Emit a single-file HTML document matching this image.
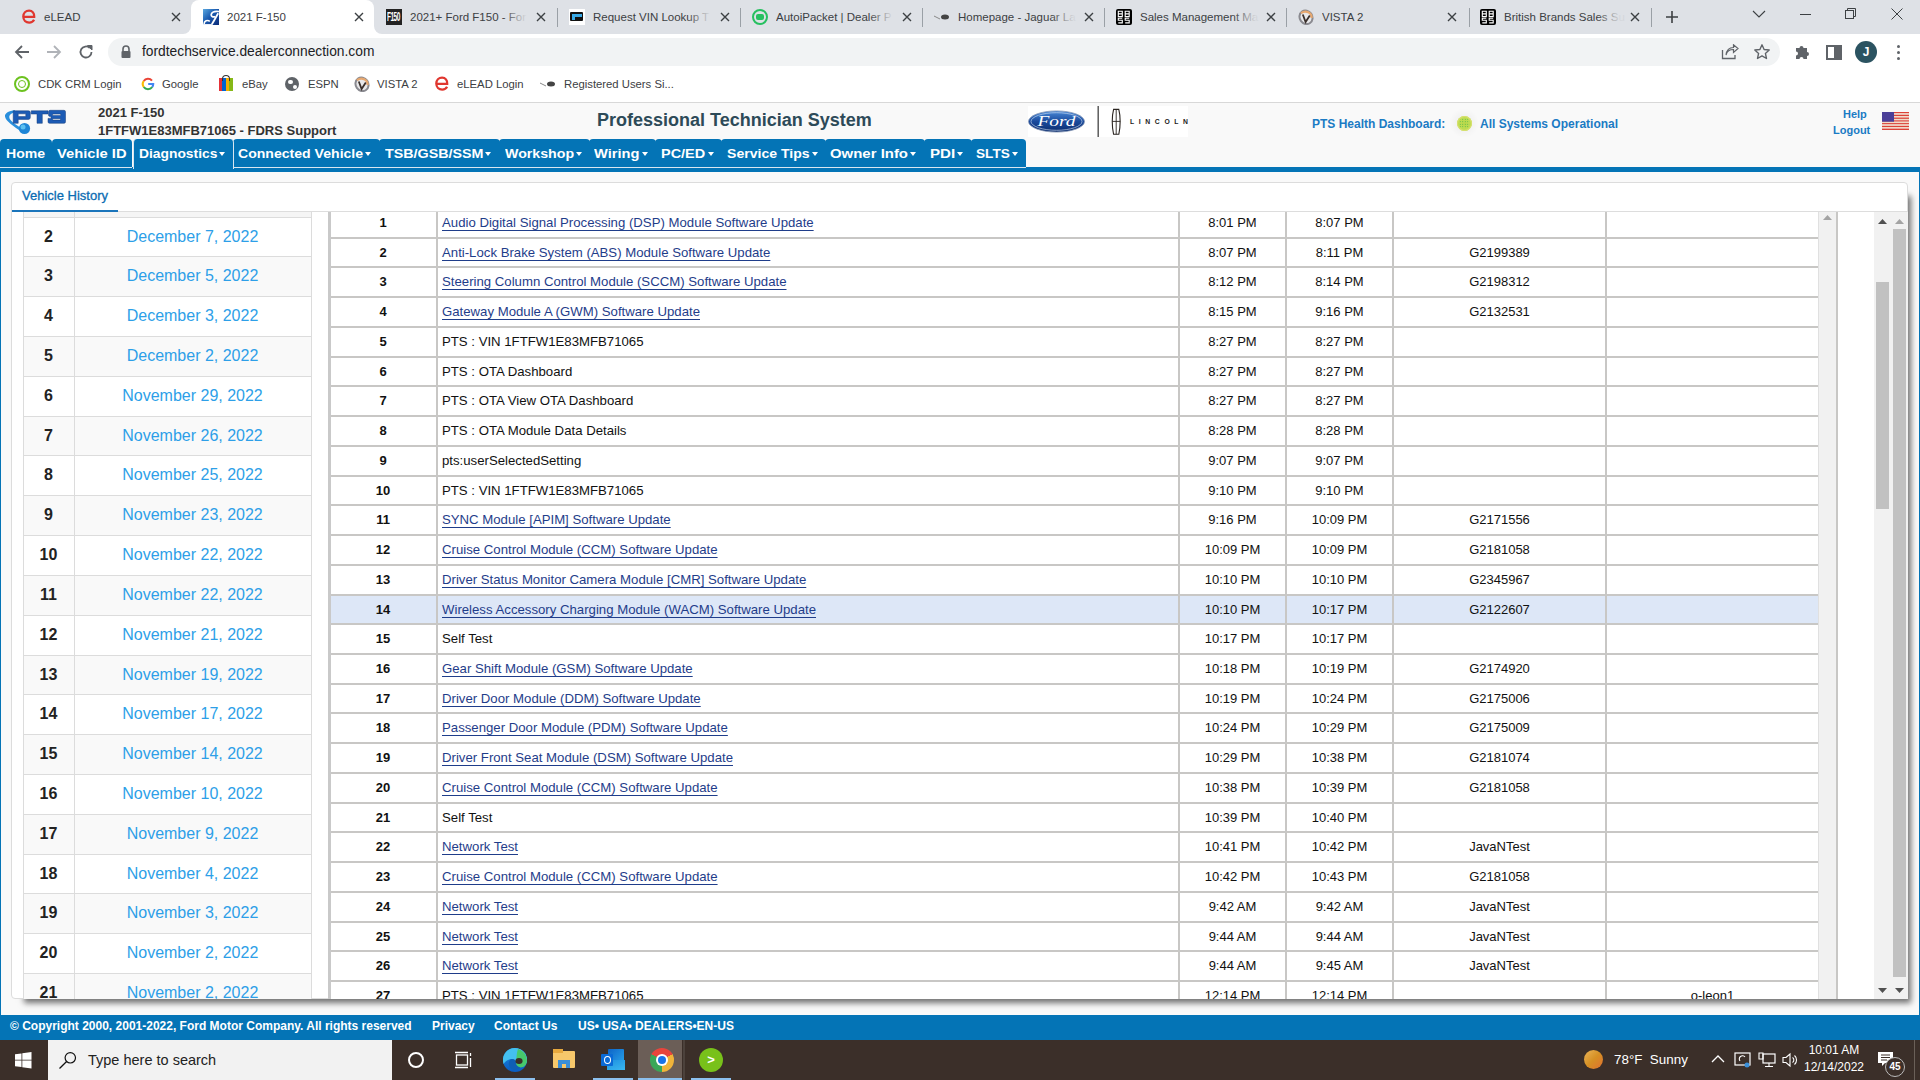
<!DOCTYPE html><html><head><meta charset="utf-8"><style>
*{margin:0;padding:0}
html,body{width:1920px;height:1080px;overflow:hidden;background:#fff;font-family:"Liberation Sans",sans-serif}
.abs{position:absolute}
.ttext{font-size:11.5px;color:#3c4043;white-space:nowrap;overflow:hidden;line-height:14px}
.btext{font-size:11.3px;color:#3c4043;white-space:nowrap;line-height:14px}
.navtab{background:#0474b6;border-radius:4px 4px 0 0;color:#fff;white-space:nowrap}
.navt{font:bold 13px "Liberation Sans";line-height:15px;color:#fff;white-space:nowrap;transform-origin:0 0}
.caret{width:0;height:0;border-left:3.5px solid transparent;border-right:3.5px solid transparent;border-top:4px solid #fff}
.lnum{font:bold 16px "Liberation Sans";color:#222;text-align:center;line-height:19px}
.ldate{font:16px "Liberation Sans";color:#2d9fe8;text-align:center;line-height:19px}
.rnum{font:bold 13px "Liberation Sans";color:#111;text-align:center;line-height:16px}
.rlink{font:13.2px "Liberation Sans";color:#1f3d8a;text-decoration:underline;text-underline-offset:3px;white-space:nowrap;line-height:16px}
.rtxt{font:13.2px "Liberation Sans";color:#111;white-space:nowrap;line-height:16px}
.rc{font:13px "Liberation Sans";color:#111;text-align:center;white-space:nowrap;line-height:16px}
</style></head><body>
<div class="abs" style="left:0;top:0;width:1920px;height:34px;background:#dee1e6"></div>
<div class="abs" style="left:191px;top:0;width:183px;height:34px;background:#fff;border-radius:8px 8px 0 0"></div>
<div class="abs" style="left:183px;top:26px;width:8px;height:8px;background:#fff"></div><div class="abs" style="left:175px;top:18px;width:16px;height:16px;background:#dee1e6;border-radius:8px"></div>
<div class="abs" style="left:374px;top:26px;width:8px;height:8px;background:#fff"></div><div class="abs" style="left:374px;top:18px;width:16px;height:16px;background:#dee1e6;border-radius:8px"></div>
<div class="abs" style="left:557px;top:8px;width:1px;height:19px;background:#9aa0a6"></div>
<div class="abs" style="left:740px;top:8px;width:1px;height:19px;background:#9aa0a6"></div>
<div class="abs" style="left:922px;top:8px;width:1px;height:19px;background:#9aa0a6"></div>
<div class="abs" style="left:1104px;top:8px;width:1px;height:19px;background:#9aa0a6"></div>
<div class="abs" style="left:1286px;top:8px;width:1px;height:19px;background:#9aa0a6"></div>
<div class="abs" style="left:1469px;top:8px;width:1px;height:19px;background:#9aa0a6"></div>
<div class="abs" style="left:1651px;top:8px;width:1px;height:19px;background:#9aa0a6"></div>
<div class="abs ttext" style="left:44px;top:10px;width:122px;">eLEAD</div>
<div class="abs" style="left:138px;top:6px;width:28px;height:20px;background:linear-gradient(90deg,#dee1e600,#dee1e6ee 80%)"></div>
<svg class="abs" style="left:171px;top:12px" width="10" height="10" viewBox="0 0 10 10"><path d="M1 1L9 9M9 1L1 9" stroke="#3c4043" stroke-width="1.4"/></svg>
<svg class="abs" style="left:22px;top:9px" width="14" height="15" viewBox="0 0 14 15"><path d="M2.2 7.8H12.2C12.4 4.2 10.4 1.6 7.1 1.6C3.8 1.6 1.3 4.2 1.3 7.6C1.3 11 3.8 13.6 7.2 13.6C9.4 13.6 11.1 12.6 12.1 10.8" fill="none" stroke="#e0372f" stroke-width="2.3"/></svg>
<div class="abs ttext" style="left:227px;top:10px;width:122px;">2021 F-150</div>
<div class="abs" style="left:321px;top:6px;width:28px;height:20px;background:linear-gradient(90deg,#ffffff00,#ffffffee 80%)"></div>
<svg class="abs" style="left:354px;top:12px" width="10" height="10" viewBox="0 0 10 10"><path d="M1 1L9 9M9 1L1 9" stroke="#3c4043" stroke-width="1.4"/></svg>
<svg class="abs" style="left:203px;top:9px" width="16" height="16" viewBox="0 0 16 16"><defs><linearGradient id="fav2" x1="0" y1="0" x2="1" y2="1"><stop offset="0" stop-color="#5aa8e0"/><stop offset="0.45" stop-color="#1c5cb0"/><stop offset="1" stop-color="#0b2a78"/></linearGradient></defs><rect width="16" height="16" fill="url(#fav2)"/><path d="M16 2.5C12.5 2 9 3 8.3 5.3C7.8 7.2 9.6 8.4 12.3 7.6" stroke="#fff" stroke-width="1.7" fill="none"/><path d="M15.2 4.2L8.8 15.5" stroke="#fff" stroke-width="1.8"/><path d="M6.8 12.3C4.5 10.6 1.2 11.8 1 15.2" stroke="#fff" stroke-width="1.6" fill="none"/><path d="M0 15.5H9" stroke="#e8eef8" stroke-width="1"/></svg>
<div class="abs ttext" style="left:410px;top:10px;width:121px;">2021+ Ford F150 - For</div>
<div class="abs" style="left:503px;top:6px;width:28px;height:20px;background:linear-gradient(90deg,#dee1e600,#dee1e6ee 80%)"></div>
<svg class="abs" style="left:536px;top:12px" width="10" height="10" viewBox="0 0 10 10"><path d="M1 1L9 9M9 1L1 9" stroke="#3c4043" stroke-width="1.4"/></svg>
<div class="abs" style="left:386px;top:9px;width:16px;height:16px;background:#222;overflow:hidden"><div style="position:absolute;left:1px;top:1px;color:#fff;font:bold 13px 'Liberation Sans';line-height:14px;letter-spacing:-1px;transform:scaleX(0.5);transform-origin:0 0">F150</div></div>
<div class="abs ttext" style="left:593px;top:10px;width:122px;">Request VIN Lookup T</div>
<div class="abs" style="left:687px;top:6px;width:28px;height:20px;background:linear-gradient(90deg,#dee1e600,#dee1e6ee 80%)"></div>
<svg class="abs" style="left:720px;top:12px" width="10" height="10" viewBox="0 0 10 10"><path d="M1 1L9 9M9 1L1 9" stroke="#3c4043" stroke-width="1.4"/></svg>
<div class="abs" style="left:569px;top:9px;width:16px;height:16px;background:#fff"><div style="position:absolute;left:1px;top:3px;width:13px;height:9px;background:#111;border-radius:1px"></div><div style="position:absolute;left:3px;top:5px;width:10px;height:3px;background:#39a9e6"></div><div style="position:absolute;left:3px;top:8px;width:3px;height:3px;background:#39a9e6"></div></div>
<div class="abs ttext" style="left:776px;top:10px;width:121px;">AutoiPacket | Dealer P</div>
<div class="abs" style="left:869px;top:6px;width:28px;height:20px;background:linear-gradient(90deg,#dee1e600,#dee1e6ee 80%)"></div>
<svg class="abs" style="left:902px;top:12px" width="10" height="10" viewBox="0 0 10 10"><path d="M1 1L9 9M9 1L1 9" stroke="#3c4043" stroke-width="1.4"/></svg>
<div class="abs" style="left:752px;top:9px;width:12px;height:12px;border:2px solid #27c060;border-radius:8px"><div style="position:absolute;left:2px;top:3px;width:8px;height:6px;background:#27c060;border-radius:2px"></div></div>
<div class="abs ttext" style="left:958px;top:10px;width:121px;">Homepage - Jaguar La</div>
<div class="abs" style="left:1051px;top:6px;width:28px;height:20px;background:linear-gradient(90deg,#dee1e600,#dee1e6ee 80%)"></div>
<svg class="abs" style="left:1084px;top:12px" width="10" height="10" viewBox="0 0 10 10"><path d="M1 1L9 9M9 1L1 9" stroke="#3c4043" stroke-width="1.4"/></svg>
<svg class="abs" style="left:934px;top:13px" width="16" height="8" viewBox="0 0 16 8"><path d="M0 3L6 6" stroke="#888" stroke-width="1"/><ellipse cx="11" cy="4" rx="4" ry="2.5" fill="#444"/></svg>
<div class="abs ttext" style="left:1140px;top:10px;width:121px;">Sales Management Ma</div>
<div class="abs" style="left:1233px;top:6px;width:28px;height:20px;background:linear-gradient(90deg,#dee1e600,#dee1e6ee 80%)"></div>
<svg class="abs" style="left:1266px;top:12px" width="10" height="10" viewBox="0 0 10 10"><path d="M1 1L9 9M9 1L1 9" stroke="#3c4043" stroke-width="1.4"/></svg>
<svg class="abs" style="left:1116px;top:9px" width="16" height="16" viewBox="0 0 16 16"><rect x="0" y="0" width="16" height="16" rx="2" fill="#000"/><g fill="none" stroke="#fff" stroke-width="1.1"><path d="M2.3 2.2H6.3V7.6H2.3ZM2.3 4.9H6.3M9.2 2.2H13.2V7.6H9.2ZM9.2 4.9H13.2"/><path d="M6.3 9.2H2.3V11.3H6.3V13.9H2.3M13.2 9.2H9.2V11.3H13.2V13.9H9.2"/></g></svg>
<div class="abs ttext" style="left:1322px;top:10px;width:120px;">VISTA 2</div>
<div class="abs" style="left:1414px;top:6px;width:28px;height:20px;background:linear-gradient(90deg,#dee1e600,#dee1e6ee 80%)"></div>
<svg class="abs" style="left:1447px;top:12px" width="10" height="10" viewBox="0 0 10 10"><path d="M1 1L9 9M9 1L1 9" stroke="#3c4043" stroke-width="1.4"/></svg>
<svg class="abs" style="left:1298px;top:9px" width="16" height="16" viewBox="0 0 16 16"><ellipse cx="8" cy="8.3" rx="6.3" ry="7" transform="rotate(-35 8 8.3)" fill="#e8e8ea" stroke="#8a8a90" stroke-width="2"/><path d="M3 4.2A7 6.3 -35 0 1 13.6 9" stroke="#e7a870" stroke-width="2.2" fill="none"/><path d="M4.8 5.5L7.6 13L11.8 6.5" stroke="#3a302c" stroke-width="1.8" fill="none"/></svg>
<div class="abs ttext" style="left:1504px;top:10px;width:121px;">British Brands Sales Su</div>
<div class="abs" style="left:1597px;top:6px;width:28px;height:20px;background:linear-gradient(90deg,#dee1e600,#dee1e6ee 80%)"></div>
<svg class="abs" style="left:1630px;top:12px" width="10" height="10" viewBox="0 0 10 10"><path d="M1 1L9 9M9 1L1 9" stroke="#3c4043" stroke-width="1.4"/></svg>
<svg class="abs" style="left:1480px;top:9px" width="16" height="16" viewBox="0 0 16 16"><rect x="0" y="0" width="16" height="16" rx="2" fill="#000"/><g fill="none" stroke="#fff" stroke-width="1.1"><path d="M2.3 2.2H6.3V7.6H2.3ZM2.3 4.9H6.3M9.2 2.2H13.2V7.6H9.2ZM9.2 4.9H13.2"/><path d="M6.3 9.2H2.3V11.3H6.3V13.9H2.3M13.2 9.2H9.2V11.3H13.2V13.9H9.2"/></g></svg>
<svg class="abs" style="left:1665px;top:10px" width="14" height="14" viewBox="0 0 14 14"><path d="M7 1V13M1 7H13" stroke="#3c4043" stroke-width="1.6"/></svg>
<svg class="abs" style="left:1752px;top:9px" width="14" height="10" viewBox="0 0 14 10"><path d="M1 2L7 8L13 2" stroke="#3c4043" stroke-width="1.1" fill="none"/></svg>
<div class="abs" style="left:1800px;top:14px;width:11px;height:1px;background:#3c4043"></div>
<svg class="abs" style="left:1845px;top:8px" width="12" height="12" viewBox="0 0 12 12"><rect x="0.5" y="2.5" width="8" height="8" fill="none" stroke="#3c4043"/><path d="M2.5 2.5V0.5H10.5V8.5H8.5" fill="none" stroke="#3c4043"/></svg>
<svg class="abs" style="left:1891px;top:8px" width="12" height="12" viewBox="0 0 12 12"><path d="M0.5 0.5L11.5 11.5M11.5 0.5L0.5 11.5" stroke="#3c4043" stroke-width="1"/></svg>
<div class="abs" style="left:0;top:34px;width:1920px;height:68px;background:#fff"></div>
<div class="abs" style="left:0;top:102px;width:1920px;height:1px;background:#d8d8d8"></div>
<svg class="abs" style="left:14px;top:44px" width="16" height="16" viewBox="0 0 16 16"><path d="M15 8H2M8 2L2 8L8 14" stroke="#5f6368" stroke-width="1.8" fill="none"/></svg>
<svg class="abs" style="left:46px;top:44px" width="16" height="16" viewBox="0 0 16 16"><path d="M1 8H14M8 2L14 8L8 14" stroke="#b0b3b8" stroke-width="1.8" fill="none"/></svg>
<svg class="abs" style="left:78px;top:44px" width="16" height="16" viewBox="0 0 16 16"><path d="M13.5 8A5.5 5.5 0 1 1 11.8 4" stroke="#5f6368" stroke-width="1.8" fill="none"/><path d="M9.5 1.5H14V6Z" fill="#5f6368" stroke="#5f6368" stroke-width="1"/></svg>
<div class="abs" style="left:108px;top:38px;width:1672px;height:28px;background:#f1f3f4;border-radius:14px"></div>
<svg class="abs" style="left:120px;top:45px" width="12" height="14" viewBox="0 0 12 14"><path d="M3 6V4A3 3 0 0 1 9 4V6" stroke="#5f6368" stroke-width="1.6" fill="none"/><rect x="1.5" y="6" width="9" height="7" rx="1" fill="#5f6368"/></svg>
<div class="abs" style="left:142px;top:44px;font-size:13.8px;color:#202124;white-space:nowrap">fordtechservice.dealerconnection.com</div>
<svg class="abs" style="left:1721px;top:44px" width="18" height="16" viewBox="0 0 18 16"><path d="M1.5 6V14.5H14V11" stroke="#5f6368" stroke-width="1.3" fill="none"/><path d="M5 11C6 7 9 5.5 12.5 5.5V8.5L17 4.5L12.5 0.8V3.5C8 3.5 5.5 7 5 11Z" stroke="#5f6368" stroke-width="1.2" fill="none"/></svg>
<svg class="abs" style="left:1753px;top:43px" width="18" height="18" viewBox="0 0 18 18"><path d="M9 1.8L11.1 6.5L16.2 7L12.4 10.4L13.5 15.5L9 12.9L4.5 15.5L5.6 10.4L1.8 7L6.9 6.5Z" stroke="#5f6368" stroke-width="1.4" fill="none" stroke-linejoin="round"/></svg>
<svg class="abs" style="left:1794px;top:44px" width="16" height="16" viewBox="0 0 16 16"><path d="M2 4H5.5A2 2 0 0 1 9.5 4H13V8A2 2 0 0 1 13 12V15H9.5A2 2 0 0 0 5.5 15H2V11.5A2 2 0 0 0 2 7.5Z" fill="#5f6368"/></svg>
<div class="abs" style="left:1826px;top:45px;width:12px;height:11px;border:2px solid #5f6368;border-left-width:2px"></div><div class="abs" style="left:1834px;top:45px;width:6px;height:15px;background:#5f6368"></div>
<div class="abs" style="left:1855px;top:41px;width:22px;height:22px;border-radius:11px;background:#2b5361;color:#fff;font-size:12px;font-weight:bold;text-align:center;line-height:22px">J</div>
<div class="abs" style="left:1897px;top:45px;width:3px;height:3px;border-radius:2px;background:#5f6368"></div>
<div class="abs" style="left:1897px;top:51px;width:3px;height:3px;border-radius:2px;background:#5f6368"></div>
<div class="abs" style="left:1897px;top:57px;width:3px;height:3px;border-radius:2px;background:#5f6368"></div>
<div class="abs btext" style="left:38px;top:77px">CDK CRM Login</div>
<div class="abs" style="left:14px;top:76px;width:12px;height:12px;border-radius:8px;border:2px solid #6cc21f"><div style="position:absolute;left:2px;top:2px;width:8px;height:8px;border-radius:4px;border:1px solid #6cc21f;box-sizing:border-box"></div></div>
<div class="abs btext" style="left:162px;top:77px">Google</div>
<svg class="abs" style="left:141px;top:77px" width="14" height="14" viewBox="0 0 14 14"><g fill="none" stroke-width="2.1"><path d="M2.74 4.02A5.2 5.2 0 0 1 10.98 3.66" stroke="#ea4335"/><path d="M2.74 9.98A5.2 5.2 0 0 1 2.74 4.02" stroke="#fbbc05"/><path d="M11.26 9.98A5.2 5.2 0 0 1 2.74 9.98" stroke="#34a853"/><path d="M7.2 7H12.2A5.2 5.2 0 0 1 11.26 9.98" stroke="#4285f4"/></g></svg>
<div class="abs btext" style="left:242px;top:77px">eBay</div>
<div class="abs" style="left:219px;top:78px;width:14px;height:13px;background:linear-gradient(90deg,#e53238 0 25%,#0064d2 25% 50%,#f5af02 50% 75%,#86b817 75%)"></div><div class="abs" style="left:222px;top:75px;width:6px;height:5px;border:1.5px solid #333;border-bottom:none;border-radius:4px 4px 0 0"></div>
<div class="abs btext" style="left:308px;top:77px">ESPN</div>
<div class="abs" style="left:285px;top:77px;width:14px;height:14px;border-radius:7px;background:#5f6368"><div style="position:absolute;left:3px;top:3px;width:5px;height:4px;background:#fff;border-radius:2px"></div><div style="position:absolute;left:8px;top:8px;width:4px;height:4px;background:#fff;border-radius:2px"></div></div>
<div class="abs btext" style="left:377px;top:77px">VISTA 2</div>
<svg class="abs" style="left:354px;top:76px" width="16" height="16" viewBox="0 0 16 16"><ellipse cx="8" cy="8.3" rx="6.3" ry="7" transform="rotate(-35 8 8.3)" fill="#e8e8ea" stroke="#8a8a90" stroke-width="2"/><path d="M3 4.2A7 6.3 -35 0 1 13.6 9" stroke="#e7a870" stroke-width="2.2" fill="none"/><path d="M4.8 5.5L7.6 13L11.8 6.5" stroke="#3a302c" stroke-width="1.8" fill="none"/></svg>
<div class="abs btext" style="left:457px;top:77px">eLEAD Login</div>
<svg class="abs" style="left:435px;top:76px" width="14" height="15" viewBox="0 0 14 15"><path d="M2.2 7.8H12.2C12.4 4.2 10.4 1.6 7.1 1.6C3.8 1.6 1.3 4.2 1.3 7.6C1.3 11 3.8 13.6 7.2 13.6C9.4 13.6 11.1 12.6 12.1 10.8" fill="none" stroke="#e0372f" stroke-width="2.3"/></svg>
<div class="abs btext" style="left:564px;top:77px">Registered Users Si...</div>
<svg class="abs" style="left:540px;top:80px" width="16" height="8" viewBox="0 0 16 8"><path d="M0 3L6 6" stroke="#888" stroke-width="1"/><ellipse cx="11" cy="4" rx="4" ry="2.5" fill="#444"/></svg>
<div class="abs" style="left:0;top:103px;width:1920px;height:937px;background:#f9f9f9"></div>
<svg class="abs" style="left:0;top:104px" width="70" height="35" viewBox="0 0 70 35">
<path d="M15 6.2C9 6.8 4.5 9 5 12.5C5.6 17 13 22 23 28.5L25 26.5C16 21 9.5 17 9.3 13.3C9.1 10.6 12 8.8 15 8.2Z" fill="#2a8fdc"/>
<circle cx="24.5" cy="24.5" r="5.6" fill="#1f86d6"/><circle cx="23" cy="23" r="2.5" fill="#5cc0f0"/>
<g fill="#1c5bb5" stroke="#173d7a" stroke-width="0.5">
<path d="M13.2 6.8H28.5Q30.3 6.8 30.3 8.6V13.6Q30.3 15.4 28.5 15.4H18.2V19.3H13.2ZM18.2 9.8V12.6H25.8V9.8Z" fill-rule="evenodd"/>
<path d="M31.2 6.8H48V10H42.3V19.3H37V10H31.2Z"/>
<path fill-rule="evenodd" d="M50 6.3H64Q65.5 6.3 65.5 7.8V17.8Q65.5 19.3 64 19.3H49.5Q48 19.3 48 17.8V14.4H51V12.4H49.8Q48.5 12.4 48.5 11V7.8Q48.5 6.3 50 6.3ZM52.6 10H60.7V11.4H52.6ZM52.6 14.7H60.5V16.1H52.6Z"/>
</g>
</svg>
<div class="abs" style="left:98px;top:105px;font:bold 13px 'Liberation Sans';color:#333;white-space:nowrap">2021 F-150</div>
<div class="abs" style="left:98px;top:123px;font:bold 13px 'Liberation Sans';color:#333;white-space:nowrap">1FTFW1E83MFB71065 - FDRS Support</div>
<div class="abs" style="left:597px;top:109.5px;font:bold 18px 'Liberation Sans';color:#2d4a58;white-space:nowrap">Professional Technician System</div>
<div class="abs" style="left:1028px;top:106px;width:160px;height:31px;background:#fff"></div>
<svg class="abs" style="left:1028px;top:106px" width="160" height="31" viewBox="0 0 160 31">
<defs><linearGradient id="fg" x1="0" y1="0" x2="0" y2="1"><stop offset="0" stop-color="#4a8ad8"/><stop offset="0.5" stop-color="#1a4a9c"/><stop offset="1" stop-color="#0c2d6e"/></linearGradient></defs>
<ellipse cx="28.5" cy="15.5" rx="28" ry="10.6" fill="url(#fg)" stroke="#8a9ab8" stroke-width="0.8"/>
<ellipse cx="28.5" cy="15.5" rx="25.5" ry="8.8" fill="none" stroke="#d8e4f4" stroke-width="0.6"/>
<text x="28.5" y="20" text-anchor="middle" font-family="Liberation Serif" font-style="italic" font-size="14.5" fill="#fff" textLength="38" lengthAdjust="spacingAndGlyphs">Ford</text>
<rect x="69.6" y="0" width="1.1" height="31" fill="#222"/>
<path d="M85.6 3.4H90.8C92.6 10 92.6 21 90.8 28.3H85.6C83.8 21 83.8 10 85.6 3.4Z" fill="none" stroke="#2a2420" stroke-width="1.1"/>
<path d="M88.2 3.4V28.3M84.2 15.4H92.2" stroke="#2a2420" stroke-width="0.9"/>
<text x="102" y="18" font-family="Liberation Sans" font-weight="bold" font-size="6.8" fill="#222" textLength="58" lengthAdjust="spacing">LINCOLN</text>
</svg>
<div class="abs" style="left:1312px;top:117px;font:bold 12px 'Liberation Sans';color:#1b7bc4;white-space:nowrap">PTS Health Dashboard:</div>
<div class="abs" style="left:1449px;top:108px;width:30px;height:30px;border-radius:15px;background:radial-gradient(circle,rgba(0,0,0,0.06),rgba(0,0,0,0) 70%)"></div>
<div class="abs" style="left:1457px;top:115.5px;width:15px;height:15px;border-radius:8px;background:radial-gradient(circle,#b7d84a,#c8e05a);box-shadow:inset 0 0 0 1px #d8e070"></div>
<div class="abs" style="left:1459px;top:117.5px;width:11px;height:11px;border-radius:6px;background-image:radial-gradient(#3cb44a 35%,transparent 40%);background-size:2.5px 2.5px"></div>
<div class="abs" style="left:1480px;top:117px;font:bold 12px 'Liberation Sans';color:#1b7bc4;white-space:nowrap">All Systems Operational</div>
<div class="abs" style="left:1843px;top:108px;font:bold 11px 'Liberation Sans';color:#1b7bc4;white-space:nowrap">Help</div>
<div class="abs" style="left:1833px;top:124px;font:bold 11px 'Liberation Sans';color:#1b7bc4;white-space:nowrap">Logout</div>
<svg class="abs" style="left:1882px;top:112px" width="27" height="18" viewBox="0 0 27 18"><rect x="0" y="0.00" width="27" height="1.38" fill="#dc4338"/><rect x="0" y="1.38" width="27" height="1.38" fill="#f0dcc8"/><rect x="0" y="2.77" width="27" height="1.38" fill="#dc4338"/><rect x="0" y="4.15" width="27" height="1.38" fill="#f0dcc8"/><rect x="0" y="5.54" width="27" height="1.38" fill="#dc4338"/><rect x="0" y="6.92" width="27" height="1.38" fill="#f0dcc8"/><rect x="0" y="8.31" width="27" height="1.38" fill="#dc4338"/><rect x="0" y="9.69" width="27" height="1.38" fill="#f0dcc8"/><rect x="0" y="11.08" width="27" height="1.38" fill="#dc4338"/><rect x="0" y="12.46" width="27" height="1.38" fill="#f0dcc8"/><rect x="0" y="13.85" width="27" height="1.38" fill="#dc4338"/><rect x="0" y="15.23" width="27" height="1.38" fill="#f0dcc8"/><rect x="0" y="16.62" width="27" height="1.38" fill="#dc4338"/><rect x="0" y="0" width="12" height="9.7" fill="#4b3f98"/></svg>
<div class="abs" style="left:0;top:167px;width:1920px;height:5px;background:#0474b6"></div>
<div class="abs navtab" style="left:0px;top:139px;width:52.2px;height:29px;border-bottom:1px solid #d9e6f0;box-sizing:border-box"></div>
<div class="abs navt" style="z-index:3;left:6.2px;top:145.8px;transform:scaleX(1.0825)">Home</div>
<div class="abs navtab" style="left:51.6px;top:139px;width:80.4px;height:29px;border-bottom:1px solid #d9e6f0;box-sizing:border-box"></div>
<div class="abs navt" style="z-index:3;left:56.9px;top:145.8px;transform:scaleX(1.1332)">Vehicle ID</div>
<div class="abs navtab" style="left:133px;top:139px;width:100.6px;height:30px;border-left:1px solid #d9e6f0;border-right:1px solid #d9e6f0;z-index:2;box-sizing:border-box"></div>
<div class="abs navt" style="z-index:3;left:138.9px;top:145.8px;transform:scaleX(1.0639)">Diagnostics</div>
<div class="abs caret" style="z-index:3;left:219.2px;top:152.3px"></div>
<div class="abs navtab" style="left:233px;top:139px;width:146.6px;height:29px;border-bottom:1px solid #d9e6f0;box-sizing:border-box"></div>
<div class="abs navt" style="z-index:3;left:238.1px;top:145.8px;transform:scaleX(1.0823)">Connected Vehicle</div>
<div class="abs caret" style="z-index:3;left:365.1px;top:152.3px"></div>
<div class="abs navtab" style="left:379px;top:139px;width:120.6px;height:29px;border-bottom:1px solid #d9e6f0;box-sizing:border-box"></div>
<div class="abs navt" style="z-index:3;left:384.5px;top:145.8px;transform:scaleX(1.0996)">TSB/GSB/SSM</div>
<div class="abs caret" style="z-index:3;left:484.9px;top:152.3px"></div>
<div class="abs navtab" style="left:499px;top:139px;width:90.6px;height:29px;border-bottom:1px solid #d9e6f0;box-sizing:border-box"></div>
<div class="abs navt" style="z-index:3;left:504.5px;top:145.8px;transform:scaleX(1.0911)">Workshop</div>
<div class="abs caret" style="z-index:3;left:575.5px;top:152.3px"></div>
<div class="abs navtab" style="left:589px;top:139px;width:66.6px;height:29px;border-bottom:1px solid #d9e6f0;box-sizing:border-box"></div>
<div class="abs navt" style="z-index:3;left:594.4px;top:145.8px;transform:scaleX(1.1257)">Wiring</div>
<div class="abs caret" style="z-index:3;left:641.7px;top:152.3px"></div>
<div class="abs navtab" style="left:655px;top:139px;width:66.6px;height:29px;border-bottom:1px solid #d9e6f0;box-sizing:border-box"></div>
<div class="abs navt" style="z-index:3;left:661.4px;top:145.8px;transform:scaleX(1.1125)">PC/ED</div>
<div class="abs caret" style="z-index:3;left:707.5px;top:152.3px"></div>
<div class="abs navtab" style="left:721px;top:139px;width:104.6px;height:29px;border-bottom:1px solid #d9e6f0;box-sizing:border-box"></div>
<div class="abs navt" style="z-index:3;left:727.2px;top:145.8px;transform:scaleX(1.0814)">Service Tips</div>
<div class="abs caret" style="z-index:3;left:811.7px;top:152.3px"></div>
<div class="abs navtab" style="left:825px;top:139px;width:99.6px;height:29px;border-bottom:1px solid #d9e6f0;box-sizing:border-box"></div>
<div class="abs navt" style="z-index:3;left:830.3px;top:145.8px;transform:scaleX(1.1489)">Owner Info</div>
<div class="abs caret" style="z-index:3;left:910.2px;top:152.3px"></div>
<div class="abs navtab" style="left:924px;top:139px;width:47.6px;height:29px;border-bottom:1px solid #d9e6f0;box-sizing:border-box"></div>
<div class="abs navt" style="z-index:3;left:930.0px;top:145.8px;transform:scaleX(1.1629)">PDI</div>
<div class="abs caret" style="z-index:3;left:957.1px;top:152.3px"></div>
<div class="abs navtab" style="left:971px;top:139px;width:54.700000000000045px;height:29px;border-bottom:1px solid #d9e6f0;box-sizing:border-box"></div>
<div class="abs navt" style="z-index:3;left:976.4px;top:145.8px;transform:scaleX(1.0474)">SLTS</div>
<div class="abs caret" style="z-index:3;left:1012.1px;top:152.3px"></div>
<div class="abs" style="left:0;top:172px;width:1px;height:843px;background:#0474b6"></div>
<div class="abs" style="left:1919px;top:172px;width:1px;height:843px;background:#0474b6"></div>
<div class="abs" style="left:11px;top:182px;width:1897px;height:817px;background:#fff;border:1px solid #dcdcdc;border-radius:4px;box-sizing:border-box;box-shadow:8px 9px 6px -5px rgba(0,0,0,0.55)"></div>
<div class="abs" style="left:22px;top:188px;font:13px 'Liberation Sans';color:#0b6cb2;-webkit-text-stroke:0.3px #0b6cb2;white-space:nowrap">Vehicle History</div>
<div class="abs" style="left:12px;top:211px;width:1896px;height:1px;background:#ddd"></div>
<div class="abs" style="left:12px;top:209.5px;width:106px;height:2px;background:#1b75bb"></div>
<div class="abs" style="left:12px;top:212px;width:1896px;height:787px;overflow:hidden">
<div class="abs" style="left:11px;top:0px;width:288px;height:5px;background:#f5f5f5"></div>
<div class="abs" style="left:11px;top:45px;width:288px;height:39px;background:#f9f9f9"></div>
<div class="abs" style="left:11px;top:125px;width:288px;height:39px;background:#f9f9f9"></div>
<div class="abs" style="left:11px;top:205px;width:288px;height:38px;background:#f9f9f9"></div>
<div class="abs" style="left:11px;top:284px;width:288px;height:39px;background:#f9f9f9"></div>
<div class="abs" style="left:11px;top:364px;width:288px;height:39px;background:#f9f9f9"></div>
<div class="abs" style="left:11px;top:444px;width:288px;height:38px;background:#f9f9f9"></div>
<div class="abs" style="left:11px;top:523px;width:288px;height:39px;background:#f9f9f9"></div>
<div class="abs" style="left:11px;top:603px;width:288px;height:39px;background:#f9f9f9"></div>
<div class="abs" style="left:11px;top:682px;width:288px;height:39px;background:#f9f9f9"></div>
<div class="abs" style="left:11px;top:762px;width:288px;height:26px;background:#f9f9f9"></div>
<div class="abs" style="left:11px;top:5px;width:288px;height:1px;background:#dcdcdc"></div>
<div class="abs" style="left:11px;top:44px;width:288px;height:1px;background:#dcdcdc"></div>
<div class="abs" style="left:11px;top:84px;width:288px;height:1px;background:#dcdcdc"></div>
<div class="abs" style="left:11px;top:124px;width:288px;height:1px;background:#dcdcdc"></div>
<div class="abs" style="left:11px;top:164px;width:288px;height:1px;background:#dcdcdc"></div>
<div class="abs" style="left:11px;top:204px;width:288px;height:1px;background:#dcdcdc"></div>
<div class="abs" style="left:11px;top:243px;width:288px;height:1px;background:#dcdcdc"></div>
<div class="abs" style="left:11px;top:283px;width:288px;height:1px;background:#dcdcdc"></div>
<div class="abs" style="left:11px;top:323px;width:288px;height:1px;background:#dcdcdc"></div>
<div class="abs" style="left:11px;top:363px;width:288px;height:1px;background:#dcdcdc"></div>
<div class="abs" style="left:11px;top:403px;width:288px;height:1px;background:#dcdcdc"></div>
<div class="abs" style="left:11px;top:443px;width:288px;height:1px;background:#dcdcdc"></div>
<div class="abs" style="left:11px;top:482px;width:288px;height:1px;background:#dcdcdc"></div>
<div class="abs" style="left:11px;top:522px;width:288px;height:1px;background:#dcdcdc"></div>
<div class="abs" style="left:11px;top:562px;width:288px;height:1px;background:#dcdcdc"></div>
<div class="abs" style="left:11px;top:602px;width:288px;height:1px;background:#dcdcdc"></div>
<div class="abs" style="left:11px;top:642px;width:288px;height:1px;background:#dcdcdc"></div>
<div class="abs" style="left:11px;top:681px;width:288px;height:1px;background:#dcdcdc"></div>
<div class="abs" style="left:11px;top:721px;width:288px;height:1px;background:#dcdcdc"></div>
<div class="abs" style="left:11px;top:761px;width:288px;height:1px;background:#dcdcdc"></div>
<div class="abs" style="left:11px;top:0px;width:1px;height:800px;background:#dcdcdc"></div>
<div class="abs" style="left:62px;top:0px;width:1px;height:800px;background:#dcdcdc"></div>
<div class="abs" style="left:299px;top:0px;width:1px;height:800px;background:#dcdcdc"></div>
<div class="abs lnum" style="left:11px;top:14.8px;width:51px">2</div>
<div class="abs ldate" style="left:62px;top:14.8px;width:237px">December 7, 2022</div>
<div class="abs lnum" style="left:11px;top:53.8px;width:51px">3</div>
<div class="abs ldate" style="left:62px;top:53.8px;width:237px">December 5, 2022</div>
<div class="abs lnum" style="left:11px;top:93.8px;width:51px">4</div>
<div class="abs ldate" style="left:62px;top:93.8px;width:237px">December 3, 2022</div>
<div class="abs lnum" style="left:11px;top:133.8px;width:51px">5</div>
<div class="abs ldate" style="left:62px;top:133.8px;width:237px">December 2, 2022</div>
<div class="abs lnum" style="left:11px;top:173.8px;width:51px">6</div>
<div class="abs ldate" style="left:62px;top:173.8px;width:237px">November 29, 2022</div>
<div class="abs lnum" style="left:11px;top:213.8px;width:51px">7</div>
<div class="abs ldate" style="left:62px;top:213.8px;width:237px">November 26, 2022</div>
<div class="abs lnum" style="left:11px;top:252.8px;width:51px">8</div>
<div class="abs ldate" style="left:62px;top:252.8px;width:237px">November 25, 2022</div>
<div class="abs lnum" style="left:11px;top:292.8px;width:51px">9</div>
<div class="abs ldate" style="left:62px;top:292.8px;width:237px">November 23, 2022</div>
<div class="abs lnum" style="left:11px;top:332.8px;width:51px">10</div>
<div class="abs ldate" style="left:62px;top:332.8px;width:237px">November 22, 2022</div>
<div class="abs lnum" style="left:11px;top:372.8px;width:51px">11</div>
<div class="abs ldate" style="left:62px;top:372.8px;width:237px">November 22, 2022</div>
<div class="abs lnum" style="left:11px;top:412.8px;width:51px">12</div>
<div class="abs ldate" style="left:62px;top:412.8px;width:237px">November 21, 2022</div>
<div class="abs lnum" style="left:11px;top:452.8px;width:51px">13</div>
<div class="abs ldate" style="left:62px;top:452.8px;width:237px">November 19, 2022</div>
<div class="abs lnum" style="left:11px;top:491.8px;width:51px">14</div>
<div class="abs ldate" style="left:62px;top:491.8px;width:237px">November 17, 2022</div>
<div class="abs lnum" style="left:11px;top:531.8px;width:51px">15</div>
<div class="abs ldate" style="left:62px;top:531.8px;width:237px">November 14, 2022</div>
<div class="abs lnum" style="left:11px;top:571.8px;width:51px">16</div>
<div class="abs ldate" style="left:62px;top:571.8px;width:237px">November 10, 2022</div>
<div class="abs lnum" style="left:11px;top:611.8px;width:51px">17</div>
<div class="abs ldate" style="left:62px;top:611.8px;width:237px">November 9, 2022</div>
<div class="abs lnum" style="left:11px;top:651.8px;width:51px">18</div>
<div class="abs ldate" style="left:62px;top:651.8px;width:237px">November 4, 2022</div>
<div class="abs lnum" style="left:11px;top:690.8px;width:51px">19</div>
<div class="abs ldate" style="left:62px;top:690.8px;width:237px">November 3, 2022</div>
<div class="abs lnum" style="left:11px;top:730.8px;width:51px">20</div>
<div class="abs ldate" style="left:62px;top:730.8px;width:237px">November 2, 2022</div>
<div class="abs lnum" style="left:11px;top:770.8px;width:51px">21</div>
<div class="abs ldate" style="left:62px;top:770.8px;width:237px">November 2, 2022</div>
<div class="abs" style="left:318px;top:0px;width:1488px;height:800px;background:#fff"></div>
<div class="abs" style="left:318px;top:384px;width:1488px;height:27px;background:#dde7f7"></div>
<div class="abs" style="left:316px;top:25px;width:1490px;height:2px;background:#c8c7c5"></div>
<div class="abs" style="left:316px;top:54px;width:1490px;height:2px;background:#c8c7c5"></div>
<div class="abs" style="left:316px;top:84px;width:1490px;height:2px;background:#c8c7c5"></div>
<div class="abs" style="left:316px;top:114px;width:1490px;height:2px;background:#c8c7c5"></div>
<div class="abs" style="left:316px;top:144px;width:1490px;height:2px;background:#c8c7c5"></div>
<div class="abs" style="left:316px;top:173px;width:1490px;height:2px;background:#c8c7c5"></div>
<div class="abs" style="left:316px;top:203px;width:1490px;height:2px;background:#c8c7c5"></div>
<div class="abs" style="left:316px;top:233px;width:1490px;height:2px;background:#c8c7c5"></div>
<div class="abs" style="left:316px;top:263px;width:1490px;height:2px;background:#c8c7c5"></div>
<div class="abs" style="left:316px;top:292px;width:1490px;height:2px;background:#c8c7c5"></div>
<div class="abs" style="left:316px;top:322px;width:1490px;height:2px;background:#c8c7c5"></div>
<div class="abs" style="left:316px;top:352px;width:1490px;height:2px;background:#c8c7c5"></div>
<div class="abs" style="left:316px;top:382px;width:1490px;height:2px;background:#c8c7c5"></div>
<div class="abs" style="left:316px;top:411px;width:1490px;height:2px;background:#c8c7c5"></div>
<div class="abs" style="left:316px;top:441px;width:1490px;height:2px;background:#c8c7c5"></div>
<div class="abs" style="left:316px;top:471px;width:1490px;height:2px;background:#c8c7c5"></div>
<div class="abs" style="left:316px;top:500px;width:1490px;height:2px;background:#c8c7c5"></div>
<div class="abs" style="left:316px;top:530px;width:1490px;height:2px;background:#c8c7c5"></div>
<div class="abs" style="left:316px;top:560px;width:1490px;height:2px;background:#c8c7c5"></div>
<div class="abs" style="left:316px;top:590px;width:1490px;height:2px;background:#c8c7c5"></div>
<div class="abs" style="left:316px;top:619px;width:1490px;height:2px;background:#c8c7c5"></div>
<div class="abs" style="left:316px;top:649px;width:1490px;height:2px;background:#c8c7c5"></div>
<div class="abs" style="left:316px;top:679px;width:1490px;height:2px;background:#c8c7c5"></div>
<div class="abs" style="left:316px;top:709px;width:1490px;height:2px;background:#c8c7c5"></div>
<div class="abs" style="left:316px;top:738px;width:1490px;height:2px;background:#c8c7c5"></div>
<div class="abs" style="left:316px;top:768px;width:1490px;height:2px;background:#c8c7c5"></div>
<div class="abs" style="left:316px;top:798px;width:1490px;height:2px;background:#c8c7c5"></div>
<div class="abs" style="left:316px;top:0px;width:3px;height:800px;background:#c9c9c9"></div>
<div class="abs" style="left:424px;top:0px;width:2px;height:800px;background:#c8c7c5"></div>
<div class="abs" style="left:1166px;top:0px;width:2px;height:800px;background:#c8c7c5"></div>
<div class="abs" style="left:1273px;top:0px;width:2px;height:800px;background:#c8c7c5"></div>
<div class="abs" style="left:1380px;top:0px;width:2px;height:800px;background:#c8c7c5"></div>
<div class="abs" style="left:1593px;top:0px;width:2px;height:800px;background:#c8c7c5"></div>
<div class="abs rnum" style="left:318px;top:3.0px;width:106px">1</div>
<div class="abs rlink" style="left:430px;top:3.0px">Audio Digital Signal Processing (DSP) Module Software Update</div>
<div class="abs rc" style="left:1168px;top:3.0px;width:105px">8:01 PM</div>
<div class="abs rc" style="left:1275px;top:3.0px;width:105px">8:07 PM</div>
<div class="abs rnum" style="left:318px;top:32.7px;width:106px">2</div>
<div class="abs rlink" style="left:430px;top:32.7px">Anti-Lock Brake System (ABS) Module Software Update</div>
<div class="abs rc" style="left:1168px;top:32.7px;width:105px">8:07 PM</div>
<div class="abs rc" style="left:1275px;top:32.7px;width:105px">8:11 PM</div>
<div class="abs rc" style="left:1382px;top:32.7px;width:211px">G2199389</div>
<div class="abs rnum" style="left:318px;top:61.7px;width:106px">3</div>
<div class="abs rlink" style="left:430px;top:61.7px">Steering Column Control Module (SCCM) Software Update</div>
<div class="abs rc" style="left:1168px;top:61.7px;width:105px">8:12 PM</div>
<div class="abs rc" style="left:1275px;top:61.7px;width:105px">8:14 PM</div>
<div class="abs rc" style="left:1382px;top:61.7px;width:211px">G2198312</div>
<div class="abs rnum" style="left:318px;top:91.7px;width:106px">4</div>
<div class="abs rlink" style="left:430px;top:91.7px">Gateway Module A (GWM) Software Update</div>
<div class="abs rc" style="left:1168px;top:91.7px;width:105px">8:15 PM</div>
<div class="abs rc" style="left:1275px;top:91.7px;width:105px">9:16 PM</div>
<div class="abs rc" style="left:1382px;top:91.7px;width:211px">G2132531</div>
<div class="abs rnum" style="left:318px;top:121.7px;width:106px">5</div>
<div class="abs rtxt" style="left:430px;top:121.7px">PTS : VIN 1FTFW1E83MFB71065</div>
<div class="abs rc" style="left:1168px;top:121.7px;width:105px">8:27 PM</div>
<div class="abs rc" style="left:1275px;top:121.7px;width:105px">8:27 PM</div>
<div class="abs rnum" style="left:318px;top:151.7px;width:106px">6</div>
<div class="abs rtxt" style="left:430px;top:151.7px">PTS : OTA Dashboard</div>
<div class="abs rc" style="left:1168px;top:151.7px;width:105px">8:27 PM</div>
<div class="abs rc" style="left:1275px;top:151.7px;width:105px">8:27 PM</div>
<div class="abs rnum" style="left:318px;top:180.7px;width:106px">7</div>
<div class="abs rtxt" style="left:430px;top:180.7px">PTS : OTA View OTA Dashboard</div>
<div class="abs rc" style="left:1168px;top:180.7px;width:105px">8:27 PM</div>
<div class="abs rc" style="left:1275px;top:180.7px;width:105px">8:27 PM</div>
<div class="abs rnum" style="left:318px;top:210.7px;width:106px">8</div>
<div class="abs rtxt" style="left:430px;top:210.7px">PTS : OTA Module Data Details</div>
<div class="abs rc" style="left:1168px;top:210.7px;width:105px">8:28 PM</div>
<div class="abs rc" style="left:1275px;top:210.7px;width:105px">8:28 PM</div>
<div class="abs rnum" style="left:318px;top:240.7px;width:106px">9</div>
<div class="abs rtxt" style="left:430px;top:240.7px">pts:userSelectedSetting</div>
<div class="abs rc" style="left:1168px;top:240.7px;width:105px">9:07 PM</div>
<div class="abs rc" style="left:1275px;top:240.7px;width:105px">9:07 PM</div>
<div class="abs rnum" style="left:318px;top:270.7px;width:106px">10</div>
<div class="abs rtxt" style="left:430px;top:270.7px">PTS : VIN 1FTFW1E83MFB71065</div>
<div class="abs rc" style="left:1168px;top:270.7px;width:105px">9:10 PM</div>
<div class="abs rc" style="left:1275px;top:270.7px;width:105px">9:10 PM</div>
<div class="abs rnum" style="left:318px;top:299.7px;width:106px">11</div>
<div class="abs rlink" style="left:430px;top:299.7px">SYNC Module [APIM] Software Update</div>
<div class="abs rc" style="left:1168px;top:299.7px;width:105px">9:16 PM</div>
<div class="abs rc" style="left:1275px;top:299.7px;width:105px">10:09 PM</div>
<div class="abs rc" style="left:1382px;top:299.7px;width:211px">G2171556</div>
<div class="abs rnum" style="left:318px;top:329.7px;width:106px">12</div>
<div class="abs rlink" style="left:430px;top:329.7px">Cruise Control Module (CCM) Software Update</div>
<div class="abs rc" style="left:1168px;top:329.7px;width:105px">10:09 PM</div>
<div class="abs rc" style="left:1275px;top:329.7px;width:105px">10:09 PM</div>
<div class="abs rc" style="left:1382px;top:329.7px;width:211px">G2181058</div>
<div class="abs rnum" style="left:318px;top:359.7px;width:106px">13</div>
<div class="abs rlink" style="left:430px;top:359.7px">Driver Status Monitor Camera Module [CMR] Software Update</div>
<div class="abs rc" style="left:1168px;top:359.7px;width:105px">10:10 PM</div>
<div class="abs rc" style="left:1275px;top:359.7px;width:105px">10:10 PM</div>
<div class="abs rc" style="left:1382px;top:359.7px;width:211px">G2345967</div>
<div class="abs rnum" style="left:318px;top:389.7px;width:106px">14</div>
<div class="abs rlink" style="left:430px;top:389.7px">Wireless Accessory Charging Module (WACM) Software Update</div>
<div class="abs rc" style="left:1168px;top:389.7px;width:105px">10:10 PM</div>
<div class="abs rc" style="left:1275px;top:389.7px;width:105px">10:17 PM</div>
<div class="abs rc" style="left:1382px;top:389.7px;width:211px">G2122607</div>
<div class="abs rnum" style="left:318px;top:418.7px;width:106px">15</div>
<div class="abs rtxt" style="left:430px;top:418.7px">Self Test</div>
<div class="abs rc" style="left:1168px;top:418.7px;width:105px">10:17 PM</div>
<div class="abs rc" style="left:1275px;top:418.7px;width:105px">10:17 PM</div>
<div class="abs rnum" style="left:318px;top:448.7px;width:106px">16</div>
<div class="abs rlink" style="left:430px;top:448.7px">Gear Shift Module (GSM) Software Update</div>
<div class="abs rc" style="left:1168px;top:448.7px;width:105px">10:18 PM</div>
<div class="abs rc" style="left:1275px;top:448.7px;width:105px">10:19 PM</div>
<div class="abs rc" style="left:1382px;top:448.7px;width:211px">G2174920</div>
<div class="abs rnum" style="left:318px;top:478.7px;width:106px">17</div>
<div class="abs rlink" style="left:430px;top:478.7px">Driver Door Module (DDM) Software Update</div>
<div class="abs rc" style="left:1168px;top:478.7px;width:105px">10:19 PM</div>
<div class="abs rc" style="left:1275px;top:478.7px;width:105px">10:24 PM</div>
<div class="abs rc" style="left:1382px;top:478.7px;width:211px">G2175006</div>
<div class="abs rnum" style="left:318px;top:507.7px;width:106px">18</div>
<div class="abs rlink" style="left:430px;top:507.7px">Passenger Door Module (PDM) Software Update</div>
<div class="abs rc" style="left:1168px;top:507.7px;width:105px">10:24 PM</div>
<div class="abs rc" style="left:1275px;top:507.7px;width:105px">10:29 PM</div>
<div class="abs rc" style="left:1382px;top:507.7px;width:211px">G2175009</div>
<div class="abs rnum" style="left:318px;top:537.7px;width:106px">19</div>
<div class="abs rlink" style="left:430px;top:537.7px">Driver Front Seat Module (DSM) Software Update</div>
<div class="abs rc" style="left:1168px;top:537.7px;width:105px">10:29 PM</div>
<div class="abs rc" style="left:1275px;top:537.7px;width:105px">10:38 PM</div>
<div class="abs rc" style="left:1382px;top:537.7px;width:211px">G2181074</div>
<div class="abs rnum" style="left:318px;top:567.7px;width:106px">20</div>
<div class="abs rlink" style="left:430px;top:567.7px">Cruise Control Module (CCM) Software Update</div>
<div class="abs rc" style="left:1168px;top:567.7px;width:105px">10:38 PM</div>
<div class="abs rc" style="left:1275px;top:567.7px;width:105px">10:39 PM</div>
<div class="abs rc" style="left:1382px;top:567.7px;width:211px">G2181058</div>
<div class="abs rnum" style="left:318px;top:597.7px;width:106px">21</div>
<div class="abs rtxt" style="left:430px;top:597.7px">Self Test</div>
<div class="abs rc" style="left:1168px;top:597.7px;width:105px">10:39 PM</div>
<div class="abs rc" style="left:1275px;top:597.7px;width:105px">10:40 PM</div>
<div class="abs rnum" style="left:318px;top:626.7px;width:106px">22</div>
<div class="abs rlink" style="left:430px;top:626.7px">Network Test</div>
<div class="abs rc" style="left:1168px;top:626.7px;width:105px">10:41 PM</div>
<div class="abs rc" style="left:1275px;top:626.7px;width:105px">10:42 PM</div>
<div class="abs rc" style="left:1382px;top:626.7px;width:211px">JavaNTest</div>
<div class="abs rnum" style="left:318px;top:656.7px;width:106px">23</div>
<div class="abs rlink" style="left:430px;top:656.7px">Cruise Control Module (CCM) Software Update</div>
<div class="abs rc" style="left:1168px;top:656.7px;width:105px">10:42 PM</div>
<div class="abs rc" style="left:1275px;top:656.7px;width:105px">10:43 PM</div>
<div class="abs rc" style="left:1382px;top:656.7px;width:211px">G2181058</div>
<div class="abs rnum" style="left:318px;top:686.7px;width:106px">24</div>
<div class="abs rlink" style="left:430px;top:686.7px">Network Test</div>
<div class="abs rc" style="left:1168px;top:686.7px;width:105px">9:42 AM</div>
<div class="abs rc" style="left:1275px;top:686.7px;width:105px">9:42 AM</div>
<div class="abs rc" style="left:1382px;top:686.7px;width:211px">JavaNTest</div>
<div class="abs rnum" style="left:318px;top:716.7px;width:106px">25</div>
<div class="abs rlink" style="left:430px;top:716.7px">Network Test</div>
<div class="abs rc" style="left:1168px;top:716.7px;width:105px">9:44 AM</div>
<div class="abs rc" style="left:1275px;top:716.7px;width:105px">9:44 AM</div>
<div class="abs rc" style="left:1382px;top:716.7px;width:211px">JavaNTest</div>
<div class="abs rnum" style="left:318px;top:745.7px;width:106px">26</div>
<div class="abs rlink" style="left:430px;top:745.7px">Network Test</div>
<div class="abs rc" style="left:1168px;top:745.7px;width:105px">9:44 AM</div>
<div class="abs rc" style="left:1275px;top:745.7px;width:105px">9:45 AM</div>
<div class="abs rc" style="left:1382px;top:745.7px;width:211px">JavaNTest</div>
<div class="abs rnum" style="left:318px;top:775.7px;width:106px">27</div>
<div class="abs rtxt" style="left:430px;top:775.7px">PTS : VIN 1FTFW1E83MFB71065</div>
<div class="abs rc" style="left:1168px;top:775.7px;width:105px">12:14 PM</div>
<div class="abs rc" style="left:1275px;top:775.7px;width:105px">12:14 PM</div>
<div class="abs rc" style="left:1595px;top:775.7px;width:211px">o-leon1</div>
<div class="abs" style="left:1806px;top:0px;width:18px;height:800px;background:#f1f1f1"></div>
<div class="abs" style="left:1806px;top:0px;width:1px;height:800px;background:#e0e0e0"></div>
<div class="abs" style="left:1824px;top:0px;width:2px;height:800px;background:#c8c7c5"></div>
<div class="abs" style="left:1826px;top:0px;width:36px;height:800px;background:#fff"></div>
<div class="abs" style="left:1862px;top:0px;width:34px;height:800px;background:#f1f1f1"></div>
<div class="abs" style="left:1864px;top:70px;width:13px;height:227px;background:#c1c1c1"></div>
<div class="abs" style="left:1881px;top:17px;width:13px;height:748px;background:#c1c1c1"></div>
<svg class="abs" style="left:1810.5px;top:2.5px" width="9" height="5" viewBox="0 0 9 5"><path d="M0 5L4.5 0L9 5Z" fill="#a3a3a3"/></svg>
<svg class="abs" style="left:1866.0px;top:6.5px" width="9" height="5" viewBox="0 0 9 5"><path d="M0 5L4.5 0L9 5Z" fill="#505050"/></svg>
<svg class="abs" style="left:1883.0px;top:6.5px" width="9" height="5" viewBox="0 0 9 5"><path d="M0 5L4.5 0L9 5Z" fill="#a3a3a3"/></svg>
<svg class="abs" style="left:1866.0px;top:775.5px" width="9" height="5" viewBox="0 0 9 5"><path d="M0 0L9 0L4.5 5Z" fill="#505050"/></svg>
<svg class="abs" style="left:1883.0px;top:775.5px" width="9" height="5" viewBox="0 0 9 5"><path d="M0 0L9 0L4.5 5Z" fill="#505050"/></svg>
</div>
<div class="abs" style="left:0;top:1015px;width:1920px;height:25px;background:#0474b6"></div>
<div class="abs" style="left:10px;top:1019px;font:bold 12px 'Liberation Sans';color:#fff;white-space:nowrap">© Copyright 2000, 2001-2022, Ford Motor Company. All rights reserved</div>
<div class="abs" style="left:432px;top:1019px;font:bold 12px 'Liberation Sans';color:#fff;white-space:nowrap">Privacy</div>
<div class="abs" style="left:494px;top:1019px;font:bold 12px 'Liberation Sans';color:#fff;white-space:nowrap">Contact Us</div>
<div class="abs" style="left:578px;top:1019px;font:bold 12px 'Liberation Sans';color:#fff;white-space:nowrap">US• USA• DEALERS•EN-US</div>
<div class="abs" style="left:0;top:1040px;width:1920px;height:40px;background:#3b2f29"></div>
<svg class="abs" style="left:15px;top:1052px" width="17" height="17" viewBox="0 0 17 17"><path d="M0 2.3L6.5 1.4V7.8H0ZM7.3 1.3L16.5 0V7.8H7.3ZM0 8.6H6.5V15L0 14.2ZM7.3 8.6H16.5V16.5L7.3 15.2Z" fill="#fff"/></svg>
<div class="abs" style="left:48px;top:1040px;width:344px;height:40px;background:#f2f2f2"></div>
<svg class="abs" style="left:58px;top:1051px" width="20" height="20" viewBox="0 0 20 20"><circle cx="12.3" cy="6.8" r="5.2" fill="none" stroke="#111" stroke-width="1.2"/><path d="M8.6 10.5L1.5 17.5" stroke="#111" stroke-width="1.3"/></svg>
<div class="abs" style="left:88px;top:1052px;font:14.5px 'Liberation Sans';color:#222;white-space:nowrap">Type here to search</div>
<div class="abs" style="left:408px;top:1052px;width:12px;height:12px;border:2px solid #fff;border-radius:8px"></div>
<svg class="abs" style="left:455px;top:1051px" width="18" height="18" viewBox="0 0 18 18"><rect x="1.5" y="4" width="11" height="10" fill="none" stroke="#fff" stroke-width="1.3"/><path d="M0 1.5H13M0 16.5H13M15.5 2V5M15.5 7V16" stroke="#fff" stroke-width="1.3"/></svg>
<svg class="abs" style="left:503px;top:1048px" width="24" height="24" viewBox="0 0 24 24">
<defs><linearGradient id="eg1" x1="0" y1="0" x2="0" y2="1"><stop offset="0" stop-color="#1a8ce8"/><stop offset="1" stop-color="#0a5cc0"/></linearGradient></defs>
<circle cx="12" cy="12" r="12" fill="url(#eg1)"/>
<path d="M12 0A12 12 0 0 1 24 12C24 16 21 19 17.5 19C14.5 19 13 17 13 15A4 4 0 0 0 9 11C5.5 11 2 13.5 0.6 16A12 12 0 0 1 12 0Z" fill="#44c0ef"/>
<path d="M15 1A12 12 0 0 1 24 12C24 16 21.5 19.5 17.5 19.5C15 19.5 12.5 17.5 13 14.5C14 10 13 7 15 1Z" fill="#47c96b"/>
<path d="M9 11C11.5 11 13 13 13 15C13 17 14.5 19 17.5 19.5C16 21 14 22 12 22C7 22 5 17 6 14C6.5 12 7.5 11 9 11Z" fill="#0f5fb5"/>
<ellipse cx="16" cy="13" rx="3.6" ry="3" fill="#3b2f29"/>
</svg>
<div class="abs" style="left:553px;top:1051px;width:22px;height:17px;background:#f7c86b;border-radius:1px"></div><div class="abs" style="left:553px;top:1049px;width:10px;height:4px;background:#e7a93e"></div><div class="abs" style="left:558px;top:1060px;width:12px;height:8px;background:#3a8fd8"></div><div class="abs" style="left:562px;top:1064px;width:4px;height:4px;background:#f7c86b"></div>
<div class="abs" style="left:608px;top:1049px;width:16px;height:21px;background:linear-gradient(135deg,#0d64c8,#2fb0ef);border-radius:1px"></div>
<div class="abs" style="left:607px;top:1060px;width:18px;height:10px;background:linear-gradient(160deg,#1e90e0,#3ab8f0)"></div>
<div class="abs" style="left:601px;top:1054px;width:12px;height:12px;background:#0a6ad6;border-radius:1px"></div>
<div class="abs" style="left:603.5px;top:1056px;width:7px;height:8px;border:1.6px solid #fff;border-radius:50%;box-sizing:border-box"></div>
<div class="abs" style="left:638px;top:1040px;width:44px;height:40px;background:#6b5e57"></div>
<div class="abs" style="left:650px;top:1048px;width:24px;height:24px;border-radius:12px;background:conic-gradient(from -60deg,#e8453c 0 120deg,#f0b43a 120deg 240deg,#3aa757 240deg 360deg)"></div><div class="abs" style="left:656px;top:1054px;width:12px;height:12px;border-radius:6px;background:#fff"></div><div class="abs" style="left:658px;top:1056px;width:8px;height:8px;border-radius:4px;background:#1a73e8"></div>
<div class="abs" style="left:683px;top:1040px;width:2px;height:40px;background:#4c423c"></div>
<div class="abs" style="left:699px;top:1048px;width:24px;height:24px;border-radius:12px;background:#78c11a;color:#fff;font:bold 13px 'Liberation Sans';line-height:24px;text-align:center">&gt;</div>
<div class="abs" style="left:495px;top:1078px;width:40px;height:2px;background:#8cc0ee"></div>
<div class="abs" style="left:593px;top:1078px;width:40px;height:2px;background:#8cc0ee"></div>
<div class="abs" style="left:638px;top:1078px;width:44px;height:2px;background:#8cc0ee"></div>
<div class="abs" style="left:691px;top:1078px;width:40px;height:2px;background:#8cc0ee"></div>
<div class="abs" style="left:1584px;top:1050px;width:19px;height:19px;border-radius:10px;background:linear-gradient(135deg,#eab458 0%,#d69024 50%,#e07030 100%)"></div>
<div class="abs" style="left:1614px;top:1052px;font:13.4px 'Liberation Sans';color:#fff;white-space:nowrap">78°F&nbsp; Sunny</div>
<svg class="abs" style="left:1711px;top:1054px" width="14" height="9" viewBox="0 0 14 9"><path d="M1 8L7 2L13 8" stroke="#fff" stroke-width="1.3" fill="none"/></svg>
<svg class="abs" style="left:1734px;top:1051px" width="18" height="18" viewBox="0 0 18 18"><rect x="1" y="2" width="15" height="12" fill="none" stroke="#fff" stroke-width="1.2"/><path d="M6 10A3 3 0 0 1 11 6" stroke="#fff" stroke-width="1.1" fill="none"/><circle cx="13" cy="14" r="2.5" fill="#3a8fd8"/></svg>
<svg class="abs" style="left:1758px;top:1051px" width="18" height="18" viewBox="0 0 18 18"><rect x="5" y="3" width="12" height="9" fill="none" stroke="#fff" stroke-width="1.2"/><path d="M11 12V15M7 15.5H15M1 2H5V8H1Z" stroke="#fff" stroke-width="1.1" fill="none"/></svg>
<svg class="abs" style="left:1782px;top:1051px" width="18" height="18" viewBox="0 0 18 18"><path d="M1 6.5H4L8 3V15L4 11.5H1Z" fill="none" stroke="#fff" stroke-width="1.1"/><path d="M10.5 6.5A3 3 0 0 1 10.5 11.5M12.5 4.5A6 6 0 0 1 12.5 13.5" stroke="#fff" stroke-width="1.1" fill="none"/></svg>
<div class="abs" style="left:1802px;top:1042px;width:64px;font:12px 'Liberation Sans';color:#fff;text-align:center;line-height:17px">10:01 AM<br>12/14/2022</div>
<svg class="abs" style="left:1877px;top:1051px" width="20" height="20" viewBox="0 0 20 20"><path d="M1 1H16V12H8L5 15V12H1Z" fill="#fff"/><path d="M4 4H13M4 6.5H13M4 9H10" stroke="#3b2f29" stroke-width="1"/></svg>
<div class="abs" style="left:1885px;top:1057px;width:20px;height:20px;border-radius:10px;background:#3b2f29;border:1px solid #bbb;box-sizing:border-box;color:#fff;font:bold 10px 'Liberation Sans';line-height:18px;text-align:center">45</div>
<div class="abs" style="left:1914px;top:1040px;width:1px;height:40px;background:#6a6058"></div>
</body></html>
